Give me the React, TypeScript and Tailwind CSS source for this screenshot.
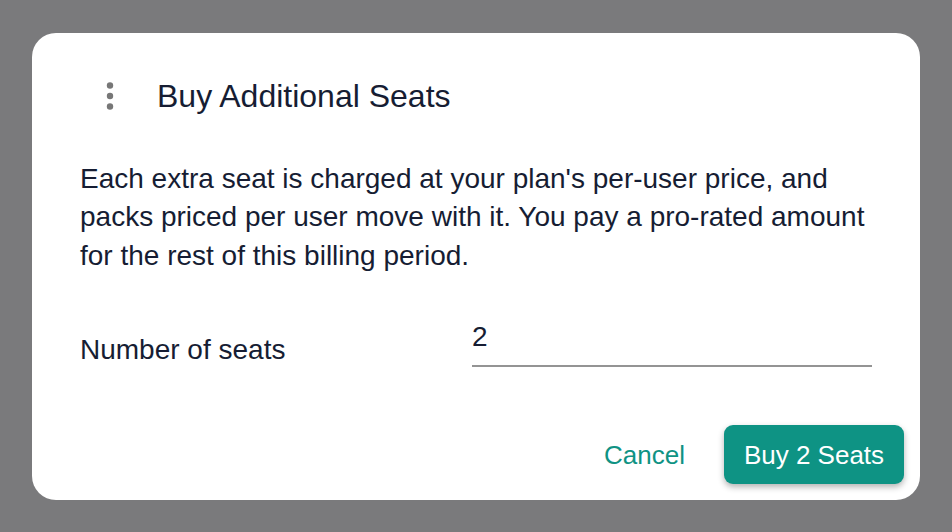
import React from "react";

const Dots = () => (
  <svg width="8" height="30" viewBox="0 0 8 30" className="text-[#777777]">
    <circle cx="4" cy="4.5" r="3.2" fill="currentColor" />
    <circle cx="4" cy="15" r="3.2" fill="currentColor" />
    <circle cx="4" cy="25.5" r="3.2" fill="currentColor" />
  </svg>
);

const App = () => {
  return (
    <div className="flex h-[532px] w-[952px] items-center justify-center bg-[#7a7a7c] [font-family:'Liberation_Sans',Arial,sans-serif]">
      <div className="flex h-[467px] w-[888px] flex-col rounded-[24px] bg-white text-[#161d33]">
        <div className="mt-[39px] flex h-[48px] items-center pl-[54px]">
          <button className="flex h-[48px] w-[48px] items-center justify-center">
            <Dots />
          </button>
          <h2 className="ml-[23px] text-[32px] leading-none">
            Buy Additional Seats
          </h2>
        </div>
        <p className="mt-[40px] px-12 text-[28px] leading-[38.5px]">
          Each extra seat is charged at your plan's per-user price, and packs
          priced per user move with it. You pay a pro-rated amount for the rest
          of this billing period.
        </p>
        <div className="mt-[47px] flex items-end px-12">
          <label className="w-[392px] pb-[2px] text-[28px] leading-[30px]">
            Number of seats
          </label>
          <div className="w-[400px] border-b-2 border-[#949494]">
            <input
              defaultValue="2"
              className="w-full bg-transparent pb-[13px] text-[28px] leading-[30px] text-[#161d33] outline-none"
            />
          </div>
        </div>
        <div className="mt-auto mb-[16px] mr-[16px] flex items-center justify-end gap-[19px]">
          <button className="h-[59px] px-[20px] pt-[2px] text-[26px] text-[#0f9384]">
            Cancel
          </button>
          <button className="h-[59px] w-[180px] rounded-[9px] bg-[#0e9384] pt-[2px] text-[26px] text-white shadow-[0_3px_6px_rgba(0,0,0,0.3)]">
            Buy 2 Seats
          </button>
        </div>
      </div>
    </div>
  );
};

export default App;
